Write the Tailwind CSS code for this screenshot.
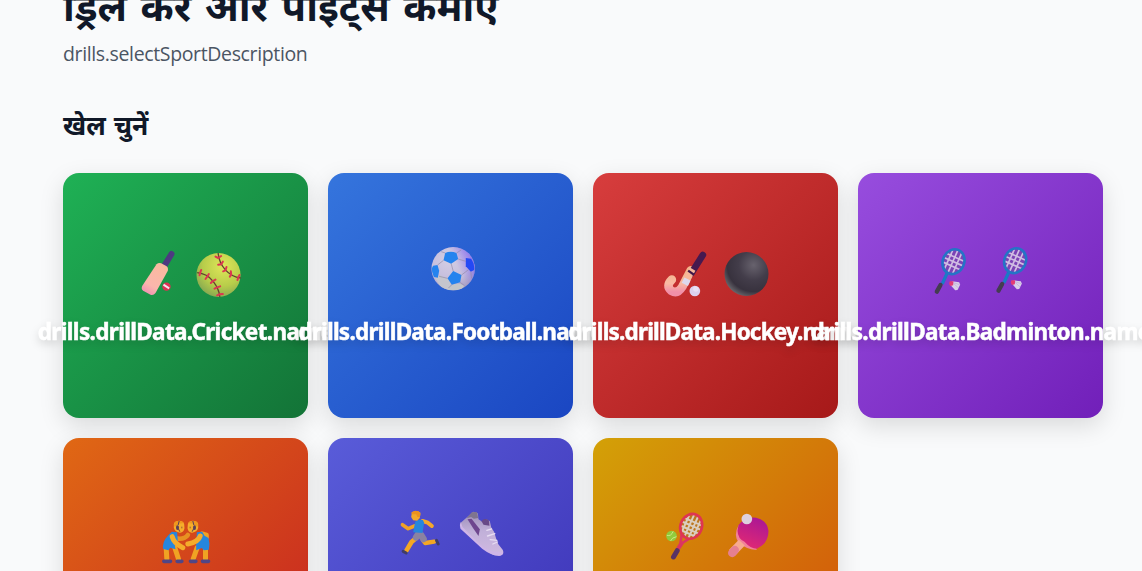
<!DOCTYPE html>
<html lang="hi">
<head>
<meta charset="utf-8">
<title>Drills</title>
<script src="https://cdn.jsdelivr.net/npm/@tailwindcss/browser@4"></script>
</head>
<body class="bg-[#f9fafb] h-[571px] overflow-hidden font-['Noto_Sans','Open_Sans',sans-serif]">
<main class="w-[1040px] h-[571px] ml-[63px]">
  <h1 class="-mt-[21px] h-[54px] leading-[54px] text-[40px] [word-spacing:3px] font-bold text-gray-900 whitespace-nowrap">ड्रिल करें और पॉइंट्स कमाएं</h1>
  <p class="mt-[7px] h-7 leading-7 text-[19.5px] tracking-[-0.36px] text-[#4b5563] font-['Open_Sans',sans-serif] whitespace-nowrap">drills.selectSportDescription</p>
  <h2 class="mt-[39px] h-9 leading-9 text-[26.5px] [word-spacing:1px] font-bold text-gray-900 whitespace-nowrap">खेल चुनें</h2>
  <div class="mt-[30px] grid grid-cols-4 gap-5">

    <section class="relative h-[245px] pt-[62px] flex flex-col items-center rounded-2xl shadow-[0_8px_24px_rgba(0,0,0,0.13)] bg-[linear-gradient(135deg,#1fb155,#137337)]">
      <svg class="w-[120px] h-[70px] shrink-0" viewBox="-13.5 0 360 210">
        <defs>
          <linearGradient id="blade" x1=".7" y1="0" x2=".2" y2="1"><stop stop-color="#f9ba9e"/><stop offset=".7" stop-color="#fab6ac"/><stop offset="1" stop-color="#ef8fb4"/></linearGradient>
          <radialGradient id="soft" cx=".6" cy=".3" r=".75"><stop stop-color="#dfe659"/><stop offset=".6" stop-color="#b8cd4a"/><stop offset="1" stop-color="#83a652"/></radialGradient>
        </defs>
        <path d="M123 57L98 98" stroke="#4d3a80" stroke-width="18" stroke-linecap="round"/>
        <path d="M78 88Q84 82 92 85L107 93Q114 97 112 107L75 174Q69 182 60 179L38 167Q31 162 35 153Z" fill="url(#blade)"/>
        <circle cx="108" cy="155" r="12.5" fill="#df3152"/><path d="M99 149l17 11" stroke="#f6e4ee" stroke-width="6"/>
        <circle cx="264" cy="120" r="66" fill="url(#soft)"/>
        <g fill="none" stroke="#63432f" stroke-width="4"><path d="M263 54Q265 82 284 104T331 129M200 113Q230 116 248 139T268 186"/></g>
        <g stroke="#dc3750" stroke-width="6" stroke-linecap="round" fill="none"><path d="M255 65l8 4 9-6M263 89l9-1 5-8M278 109l7-3 3-10M298 125l4-6-1-10M321 135l2-7 4-8M207 121l2-8 3-8M225 132l5-7 5-8M241 144l6-6 8-4M252 161l8-4 9-3M260 181l7-3 10-1"/></g>
      </svg>
      <span class="mt-[11px] h-8 leading-8 text-[22.5px] tracking-[-0.66px] font-bold text-white [-webkit-text-stroke:0.5px_white] whitespace-nowrap drop-shadow-lg">drills.drillData.Cricket.name</span>
    </section>

    <section class="relative h-[245px] pt-[62px] flex flex-col items-center rounded-2xl shadow-[0_8px_24px_rgba(0,0,0,0.13)] bg-[linear-gradient(135deg,#3575dd,#1a46c2)]">
      <svg class="w-[120px] h-[70px] shrink-0" viewBox="-88.5 0 360 210">
        <defs>
          <radialGradient id="fb" cx=".4" cy=".3" r=".75"><stop stop-color="#d4cee4"/><stop offset=".65" stop-color="#c4bcdc"/><stop offset="1" stop-color="#a39ac0"/></radialGradient>
          <linearGradient id="fbr" x1="0" y1=".5" x2="1" y2="0"><stop offset=".5" stop-color="#8a70f5" stop-opacity="0"/><stop offset="1" stop-color="#7858f5"/></linearGradient>
          <clipPath id="fc"><circle cx="98" cy="101" r="65"/></clipPath>
        </defs>
        <circle cx="98" cy="101" r="65" fill="url(#fb)"/><circle cx="98" cy="101" r="65" fill="url(#fbr)"/>
        <g clip-path="url(#fc)">
          <path d="M45 130L58 120L82 132L92 148L84 165L65 165Z" fill="#c5c5cd"/><path d="M84 157L96 148L118 146L132 152L118 170H80Z" fill="#c3c5c9"/>
          <path d="M74 54Q90 46 108 54L113 72L92 86L69 76Z" fill="#2583ee"/>
          <path d="M136 69L152 71Q164 88 161 105L151 110L136 94Z" fill="#2449f5"/>
          <path d="M98 108L123 120L119 142L94 149L81 130Z" fill="#2583ee"/>
          <path d="M38 92L51 90L56 107L52 128L40 126Q33 112 34 100Z" fill="#2583ee"/>
          <path d="M92 86L98 108M113 72L136 79M123 120L144 104M69 76L51 90M81 130L56 124M94 149L84 159M119 142L132 152M74 54L62 50M108 54L122 45M151 110L153 130" stroke="#938ba8" stroke-width="2" fill="none"/>
        </g>
      </svg>
      <span class="mt-[11px] h-8 leading-8 text-[22.5px] tracking-[-0.75px] font-bold text-white [-webkit-text-stroke:0.5px_white] whitespace-nowrap drop-shadow-lg">drills.drillData.Football.name</span>
    </section>

    <section class="relative h-[245px] pt-[62px] flex flex-col items-center rounded-2xl shadow-[0_8px_24px_rgba(0,0,0,0.13)] bg-[linear-gradient(135deg,#d73d3d,#a61919)]">
      <svg class="w-[120px] h-[70px] shrink-0" viewBox="1.5 0 360 210">
        <defs>
          <linearGradient id="hk" x1="0" y1="0" x2="0" y2="1"><stop stop-color="#f2b489"/><stop offset=".6" stop-color="#f9baa3"/><stop offset="1" stop-color="#f18fa8"/></linearGradient>
          <radialGradient id="bk" cx=".66" cy=".3" r=".75"><stop stop-color="#67626d"/><stop offset=".45" stop-color="#433d4a"/><stop offset=".8" stop-color="#38323e"/><stop offset="1" stop-color="#66656a"/></radialGradient>
        </defs>
        <path d="M106 106L80 156Q66 178 47 167Q30 153 49 134" fill="none" stroke="url(#hk)" stroke-width="26" stroke-linecap="round"/>
        <path d="M142 60L108 114" stroke="#46194f" stroke-width="20" stroke-linecap="round"/>
        <path d="M111 102L93 134" stroke="#f7b79a" stroke-width="20"/><path d="M98 107l17 12" stroke="#3f1749" stroke-width="7"/>
        <path d="M96 132L88 148" stroke="#ddd8ed" stroke-width="21"/>
        <circle cx="118" cy="168" r="16" fill="#dcd1ee"/><circle cx="121" cy="162" r="8" fill="#eee7f6" opacity=".7"/>
        <circle cx="273" cy="117" r="66" fill="url(#bk)"/>
      </svg>
      <span class="mt-[11px] h-8 leading-8 text-[22.5px] tracking-[-0.82px] font-bold text-white [-webkit-text-stroke:0.5px_white] whitespace-nowrap drop-shadow-lg">drills.drillData.Hockey.name</span>
    </section>

    <section class="relative h-[245px] pt-[62px] flex flex-col items-center rounded-2xl shadow-[0_8px_24px_rgba(0,0,0,0.13)] bg-[linear-gradient(135deg,#974dde,#711fb9)]">
      <svg class="w-[120px] h-[70px] shrink-0" viewBox="-13.5 0 360 210">
        <defs>
          <g id="bd">
            <path d="M66 112L50 147" stroke="#197bc6" stroke-width="10"/>
            <path d="M45 150L34 170" stroke="#443c51" stroke-width="13" stroke-linecap="round"/>
            <g transform="rotate(24 84 80)"><ellipse cx="84" cy="80" rx="31" ry="37" fill="#7c43b6"/>
            <path d="M68 50V110M82 44V115M96 48V112M54 66H112M53 80H115M56 94H112" stroke="#d0bde3" stroke-width="5"/><ellipse cx="84" cy="80" rx="32" ry="38" fill="none" stroke="#2474c6" stroke-width="8"/></g>
            <path d="M80 139L101 142L104 149L96 165L89 166L75 150Z" fill="#d9cee9"/><path d="M84 139L73 139Q68 147 75 153L83 151Z" fill="#e23b75"/><path d="M84 145l15 14M84 143l18 6" stroke="#b3a3cc" stroke-width="1.5"/>
          </g>
        </defs>
        <use href="#bd"/><use href="#bd" x="185" y="-3"/>
      </svg>
      <span class="mt-[11px] h-8 leading-8 text-[22.5px] tracking-[-0.65px] font-bold text-white [-webkit-text-stroke:0.5px_white] whitespace-nowrap drop-shadow-lg">drills.drillData.Badminton.name</span>
    </section>

    <section class="relative h-[245px] pt-[62px] flex flex-col items-center rounded-2xl shadow-[0_8px_24px_rgba(0,0,0,0.13)] bg-[linear-gradient(135deg,#e06814,#c62222)]">
      <svg class="w-[120px] h-[70px] shrink-0" viewBox="-73.5 -15 360 210">
        <g stroke-linecap="round" stroke-linejoin="round" fill="none">
          <path d="M47 128L49 162M73 128L84 162" stroke="#f0a323" stroke-width="15"/>
          <path d="M165 128L165 162M140 128L128 162" stroke="#f0a323" stroke-width="15"/>
          <path d="M155 86L168 90L168 98" stroke="#eda225" stroke-width="14"/>
          <path d="M82 101Q103 103 112 90" stroke="#e79122" stroke-width="14"/>
        </g>
        <path d="M40 169H60M80 169H94M120 169H136M156 169H174" stroke="#504685" stroke-width="11" stroke-linecap="round"/>
        <path d="M64 80L80 82L82 110L73 122L75 133L59 128L54 136L38 132Q34 111 54 90Z" fill="#2586dd"/>
        <path d="M139 82L155 80L162 92L174 99Q179 116 175 134L160 136L154 129L137 136L137 118Z" fill="#2586dd"/>
        <path d="M65 95Q70 115 97 128" fill="none" stroke="#f4ac2b" stroke-width="15" stroke-linecap="round"/>
        <path d="M149 93Q144 111 112 117" fill="none" stroke="#f4ac2b" stroke-width="15" stroke-linecap="round"/>
        <g id="head"><path d="M70 57Q72 47 86 48Q99 48 101 58L102 70Q99 84 88 83Q72 80 70 68Z" fill="#f5ad2c"/>
        <path d="M70 59Q72 46 88 47Q97 48 100 54L86 56L81 62L72 65Z" fill="#ef971e"/>
        <path d="M86 48L83 60M83 70L88 80" stroke="#59405b" stroke-width="3"/><ellipse cx="81" cy="68" rx="4.5" ry="7" fill="#59405b"/><path d="M94 65v5" stroke="#94583a" stroke-width="3"/></g>
        <use href="#head" transform="translate(213 0) scale(-1 1)"/>
      </svg>
    </section>

    <section class="relative h-[245px] pt-[62px] flex flex-col items-center rounded-2xl shadow-[0_8px_24px_rgba(0,0,0,0.13)] bg-[linear-gradient(135deg,#595cd9,#3c32b6)]">
      <svg class="w-[120px] h-[70px] shrink-0" viewBox="1.5 0 360 210">
        <defs><linearGradient id="shoe" x1="0" y1="0" x2="0" y2="1"><stop stop-color="#9b8cb5"/><stop offset=".45" stop-color="#c1b0d9"/><stop offset="1" stop-color="#d0b9e1"/></linearGradient></defs>
        <g fill="none" stroke-linecap="round" stroke-linejoin="round">
          <path d="M96 63L112 68L124 78" stroke="#f4a82b" stroke-width="12"/>
          <path d="M72 78L53 86L36 74" stroke="#f0a126" stroke-width="11"/>
          <path d="M78 113L63 126L48 151" stroke="#f4a724" stroke-width="14"/>
          <path d="M97 120L104 129L131 125" stroke="#f4a724" stroke-width="13"/>
          <path d="M38 154L47 159M138 121L143 132" stroke="#403d68" stroke-width="9"/>
          <path d="M84 101L77 112M91 104L99 117" stroke="#8b82a1" stroke-width="20"/>
        </g>
        <path d="M74 65Q84 57 97 60L101 68L96 99L68 97L72 76Z" fill="#2686dc"/>
        <path d="M64 38Q78 30 90 38L88 54L80 62L68 61L62 51Z" fill="#f3a92b"/><path d="M62 38Q71 29 84 34Q93 39 88 51L81 51L77 43H65Z" fill="#ec911e"/>
        <path d="M210 69L248 35L262 40L264 58L276 66Q285 52 298 64L302 82L311 96L317 116L323 132L337 150Q342 163 331 166L309 165Q282 151 256 126L211 84Z" fill="url(#shoe)"/>
        <path d="M211 66L216 81L268 132Q293 158 337 157Q339 166 326 168Q301 166 275 146L210 86Q205 76 211 66Z" fill="#cfb5e7"/>
        <path d="M244 37L259 36L263 54L250 56L242 51L228 55Z" fill="#7f748f"/>
        <path d="M231 58L243 56L268 88L264 108L247 83Z" fill="#6e468e"/>
        <path d="M273 64Q281 52 295 61L297 77L279 74Z" fill="#684987"/>
        <path d="M289 91L303 87M291 108L313 101M299 119L319 121M307 132L321 126" stroke="#e7dcf2" stroke-width="4" stroke-linecap="round"/>
      </svg>
    </section>

    <section class="relative h-[245px] pt-[62px] flex flex-col items-center rounded-2xl shadow-[0_8px_24px_rgba(0,0,0,0.13)] bg-[linear-gradient(135deg,#d3a107,#d34f0b)]">
      <svg class="w-[120px] h-[70px] shrink-0" viewBox="1.5 0 360 210">
        <defs><linearGradient id="pad" x1=".7" y1="0" x2=".3" y2="1"><stop stop-color="#aa1795"/><stop offset="1" stop-color="#e22973"/></linearGradient></defs>
        <path d="M79 101L75 130L64 149M104 114L82 128L68 149" fill="none" stroke="#dc3561" stroke-width="8"/>
        <path d="M65 152L54 171" stroke="#593365" stroke-width="15" stroke-linecap="round"/>
        <g transform="rotate(24 107 79)"><ellipse cx="107" cy="79" rx="32" ry="37" fill="#bc771e"/>
        <path d="M88 51V107M101 44V114M114 44V114M126 52V106M78 64H136M76 77H138M78 90H136M88 102H126" stroke="#dbcebf" stroke-width="6"/><ellipse cx="107" cy="79" rx="32" ry="38" fill="none" stroke="#df3552" stroke-width="8"/></g>
        <circle cx="48" cy="108" r="16" fill="#91cb3c"/><path d="M34 106Q47 110 53 94M45 123Q49 112 63 110" fill="none" stroke="#cce887" stroke-width="3"/>
        <path d="M249 76Q232 108 251 130Q280 152 304 149L282 92Z" fill="#f1819a"/>
        <path d="M259 128L230 158" stroke="#f7aa91" stroke-width="25"/><path d="M238 150L230 159" stroke="#e58092" stroke-width="25" stroke-linecap="round"/>
        <path d="M249 75Q270 49 302 53Q335 61 339 93Q339 131 304 146Q285 146 267 125Q247 116 246 92Z" fill="url(#pad)"/>
        <circle cx="274" cy="57" r="16" fill="#ddd0de"/>
      </svg>
    </section>
  </div>
</main>
</body>
</html>
